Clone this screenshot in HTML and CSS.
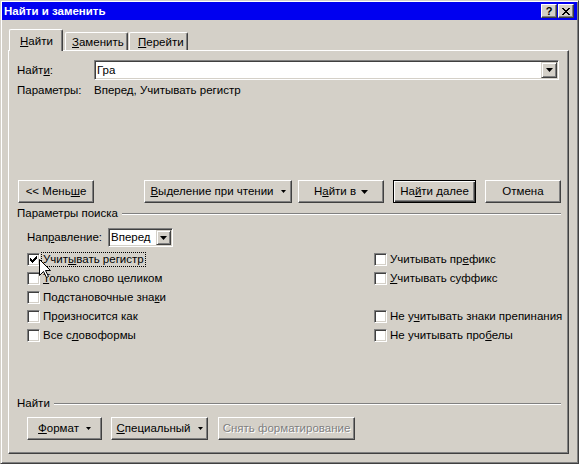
FILE: index.html
```html
<!DOCTYPE html>
<html lang="ru">
<head>
<meta charset="utf-8">
<title>Найти и заменить</title>
<link rel="stylesheet" href="styles.css">
</head>
<body>
<div class="window">
  <div class="titlebar">
    <span class="title">Найти и заменить</span>
    <div class="caption-buttons">
      <span class="cap-btn help">?</span>
      <span class="cap-btn close">
        <svg width="8" height="7" viewBox="0 0 8 7" shape-rendering="crispEdges"><path d="M0 0h2v1H0z M6 0h2v1H6z M1 1h2v1H1z M5 1h2v1H5z M2 2h4v1H2z M3 3h2v1H3z M2 4h4v1H2z M1 5h2v1H1z M5 5h2v1H5z M0 6h2v1H0z M6 6h2v1H6z" fill="#000"/></svg>
      </span>
    </div>
  </div>
  <div class="dialog">
    <div class="tabs">
      <div class="tab active"><u>Н</u>айти</div>
      <div class="tab t2"><u>З</u>аменить</div>
      <div class="tab t3"><u>П</u>ерейти</div>
    </div>
    <div class="panel">
      <div class="row find-row">
        <span class="field-label">Найт<u>и</u>:</span>
        <div class="combo">
          <span class="combo-text">Гра</span>
          <span class="dd-btn"><svg width="7" height="4" viewBox="0 0 7 4"><path d="M0 0h7L3.5 4z" fill="#000"/></svg></span>
        </div>
      </div>
      <div class="row params-row">
        <span class="field-label">Параметры:</span>
        <span>Вперед, Учитывать регистр</span>
      </div>
      <div class="row main-buttons">
        <span class="btn b-less">&lt;&lt; Мень<u>ш</u>е</span>
        <span class="btn b-read"><span><u>В</u>ыделение при чтении</span><svg class="arrow-s" width="5" height="3" viewBox="0 0 5 3"><path d="M0 0h5L2.5 3z" fill="#000"/></svg></span>
        <span class="btn b-in"><span>Н<u>а</u>йти в</span><svg class="arrow-b" width="7" height="4" viewBox="0 0 7 4"><path d="M0 0h7L3.5 4z" fill="#000"/></svg></span>
        <span class="btn default b-next">На<u>й</u>ти далее</span>
        <span class="btn b-cancel">Отмена</span>
      </div>
      <div class="group-title g-search">
        <span>Параметры поиска</span>
        <span class="etch"></span>
      </div>
      <div class="row dir-row">
        <span class="dir-label">Нап<u>р</u>авление:</span>
        <div class="combo select">
          <span class="combo-text">Вперед</span>
          <span class="dd-btn"><svg width="7" height="4" viewBox="0 0 7 4"><path d="M0 0h7L3.5 4z" fill="#000"/></svg></span>
        </div>
      </div>
      <div class="checks">
        <div class="check">
          <span class="box"><svg width="11" height="11" viewBox="0 0 11 11" shape-rendering="crispEdges"><path d="M2 4h1v3H2z M3 5h1v3H3z M4 6h1v3H4z M5 5h1v3H5z M6 4h1v3H6z M7 3h1v3H7z M8 2h1v3H8z" fill="#000"/></svg></span>
          <span class="check-label focus">Учит<u>ы</u>вать регистр</span>
        </div>
        <div class="check">
          <span class="box"></span>
          <span class="check-label">Учитывать пр<u>е</u>фикс</span>
        </div>
        <div class="check">
          <span class="box"></span>
          <span class="check-label"><u>Т</u>олько слово целиком</span>
        </div>
        <div class="check">
          <span class="box"></span>
          <span class="check-label"><u>У</u>читывать суффикс</span>
        </div>
        <div class="check">
          <span class="box"></span>
          <span class="check-label">Подстановочные зна<u>к</u>и</span>
        </div>
        <div class="check empty"></div>
        <div class="check">
          <span class="box"></span>
          <span class="check-label">Пр<u>о</u>износится как</span>
        </div>
        <div class="check">
          <span class="box"></span>
          <span class="check-label">Не у<u>ч</u>итывать знаки препинания</span>
        </div>
        <div class="check">
          <span class="box"></span>
          <span class="check-label">Все с<u>л</u>овоформы</span>
        </div>
        <div class="check">
          <span class="box"></span>
          <span class="check-label">Не учитывать про<u>б</u>елы</span>
        </div>
        <svg class="cursor" width="13" height="20" viewBox="0 0 13 20"><path d="M0.5 0.5V16.5L4.5 12.5L7.5 18.5L9.5 17.5L6.5 11.5H11.5Z" fill="#fff" stroke="#000" stroke-width="1" stroke-linejoin="miter"/></svg>
      </div>
      <div class="group-title g-find">
        <span>Найти</span>
        <span class="etch"></span>
      </div>
      <div class="row bottom-buttons">
        <span class="btn b-format"><span><u>Ф</u>ормат</span><svg class="arrow-s" width="5" height="3" viewBox="0 0 5 3"><path d="M0 0h5L2.5 3z" fill="#000"/></svg></span>
        <span class="btn b-special"><span><u>С</u>пециальный</span><svg class="arrow-s" width="5" height="3" viewBox="0 0 5 3"><path d="M0 0h5L2.5 3z" fill="#000"/></svg></span>
        <span class="btn disabled b-clear">Снять форматирование</span>
      </div>
    </div>
  </div>
</div>
</body>
</html>
```
FILE: styles.css
```css
* { box-sizing: border-box; }
html, body { margin: 0; padding: 0; }
body {
  width: 579px;
  height: 464px;
  overflow: hidden;
  background: #d4d0c8;
  font-family: "Liberation Sans", Arial, sans-serif;
  font-size: 11.5px;
  line-height: 13px;
  color: #000;
}
u { text-decoration: underline; text-underline-offset: 1px; }

.window {
  width: 579px;
  height: 464px;
  display: flex;
  flex-direction: column;
  background: #d4d0c8;
  border: 1px solid;
  border-color: #d4d0c8 #404040 #404040 #d4d0c8;
  box-shadow: inset 1px 1px #fff, inset -1px -1px #808080;
  padding: 1px;
}

.titlebar {
  flex: none;
  height: 18px;
  background: #0000f0;
  display: flex;
  align-items: center;
  justify-content: space-between;
  padding: 0 3px 0 2px;
}
.title { color: #fff; font-weight: bold; font-size: 11.5px; line-height: 13px; }
.caption-buttons { display: flex; gap: 1px; }
.cap-btn {
  width: 16px;
  height: 14px;
  background: #d4d0c8;
  border: 1px solid;
  border-color: #fff #404040 #404040 #fff;
  box-shadow: inset -1px -1px #808080;
  display: flex;
  align-items: center;
  justify-content: center;
}
.help { font-weight: bold; font-size: 11px; line-height: 12px; padding-bottom: 1px; }
.close svg { display: block; }

.dialog {
  flex: 1;
  min-height: 0;
  display: flex;
  flex-direction: column;
  margin: 9px 8px 8px 6px;
}

.tabs {
  display: flex;
  align-items: flex-end;
  height: 22px;
  margin-bottom: -1px;
  position: relative;
  z-index: 1;
}
.tab {
  height: 18px;
  margin-bottom: 1px;
  padding-top: 3px;
  background: #d4d0c8;
  border-left: 1px solid #fff;
  border-top: 1px solid #fff;
  border-right: 1px solid #404040;
  box-shadow: inset -1px 0 #808080;
  border-radius: 2px 2px 0 0;
  white-space: nowrap;
}
.tab.active {
  height: 22px;
  margin-bottom: 0;
  padding-top: 5px;
  margin-left: 1px;
  width: 54px;
  padding-left: 10px;
}
.tab.t2 { width: 63px; margin-left: 2px; padding-left: 6px; }
.tab.t3 { width: 59px; margin-left: 1px; padding-left: 8px; }

.panel {
  flex: 1;
  background: #d4d0c8;
  border: 1px solid;
  border-color: #fff #404040 #404040 #fff;
  box-shadow: inset -1px -1px #808080;
  padding: 9px 7px 0 8px;
  display: flex;
  flex-direction: column;
}

.row { display: flex; align-items: center; }
.field-label { width: 77px; flex: none; }
.find-row { height: 20px; }
.params-row { margin-top: 4px; height: 13px; }

.combo {
  flex: none;
  display: flex;
  align-items: center;
  width: 465px;
  height: 20px;
  background: #fff;
  border: 1px solid;
  border-color: #808080 #fff #fff #808080;
  box-shadow: inset 1px 1px #404040, inset -1px -1px #d4d0c8;
  padding: 1px;
}
.combo-text { flex: 1; padding-left: 1px; white-space: nowrap; }
.dd-btn {
  flex: none;
  width: 16px;
  height: 16px;
  background: #d4d0c8;
  border: 1px solid;
  border-color: #d4d0c8 #404040 #404040 #d4d0c8;
  box-shadow: inset 1px 1px #fff, inset -1px -1px #808080;
  display: flex;
  align-items: center;
  justify-content: center;
}
.dd-btn svg { display: block; }
.select { width: 65px; height: 19px; }
.select .dd-btn { width: 15px; height: 15px; }

.main-buttons { margin-top: 83px; height: 23px; }
.btn {
  flex: none;
  height: 23px;
  display: flex;
  align-items: center;
  justify-content: center;
  background: #d4d0c8;
  border: 1px solid;
  border-color: #fff #404040 #404040 #fff;
  box-shadow: inset -1px -1px #808080;
  white-space: nowrap;
}
.btn.default {
  border-color: #000;
  box-shadow: inset 1px 1px #fff, inset -1px -1px #404040, inset -2px -2px #808080;
}
.btn.disabled { color: #808080; text-shadow: 1px 1px 0 #fff; }
.arrow-s { display: block; margin-left: 7px; }
.arrow-b { display: block; margin-left: 5px; }

.b-less { width: 76px; margin-left: 1px; }
.b-read { width: 148px; margin-left: 50px; }
.b-in { width: 86px; margin-left: 6px; }
.b-next { width: 83px; margin-left: 9px; }
.b-cancel { width: 76px; margin-left: 9px; }

.group-title { display: flex; align-items: center; height: 13px; }
.group-title .etch {
  flex: 1;
  height: 2px;
  border-top: 1px solid #808080;
  border-bottom: 1px solid #fff;
  margin-left: 4px;
}
.g-search { margin-top: 4px; }
.g-find { margin-top: 52px; }

.dir-row { margin-top: 8px; height: 19px; padding-left: 10px; }
.dir-label { width: 81px; flex: none; }

.checks {
  position: relative;
  margin-top: 3px;
  padding-left: 10px;
  display: grid;
  grid-template-columns: 347px 1fr;
  grid-auto-rows: 19px;
}
.check { display: flex; align-items: center; }
.box {
  flex: none;
  width: 13px;
  height: 13px;
  background: #fff;
  border: 1px solid;
  border-color: #808080 #fff #fff #808080;
  box-shadow: inset 1px 1px #404040, inset -1px -1px #d4d0c8;
}
.box svg { display: block; }
.check-label {
  margin-left: 1px;
  padding: 0 1px;
  border: 1px solid transparent;
  line-height: 13px;
  white-space: nowrap;
}
.check-label.focus { border: 1px dotted #000; }
.cursor { position: absolute; left: 22px; top: 9px; display: block; }

.bottom-buttons { margin-top: 7px; height: 23px; padding-left: 10px; }
.b-format { width: 75px; }
.b-special { width: 97px; margin-left: 9px; }
.b-clear { width: 137px; margin-left: 10px; }
```
